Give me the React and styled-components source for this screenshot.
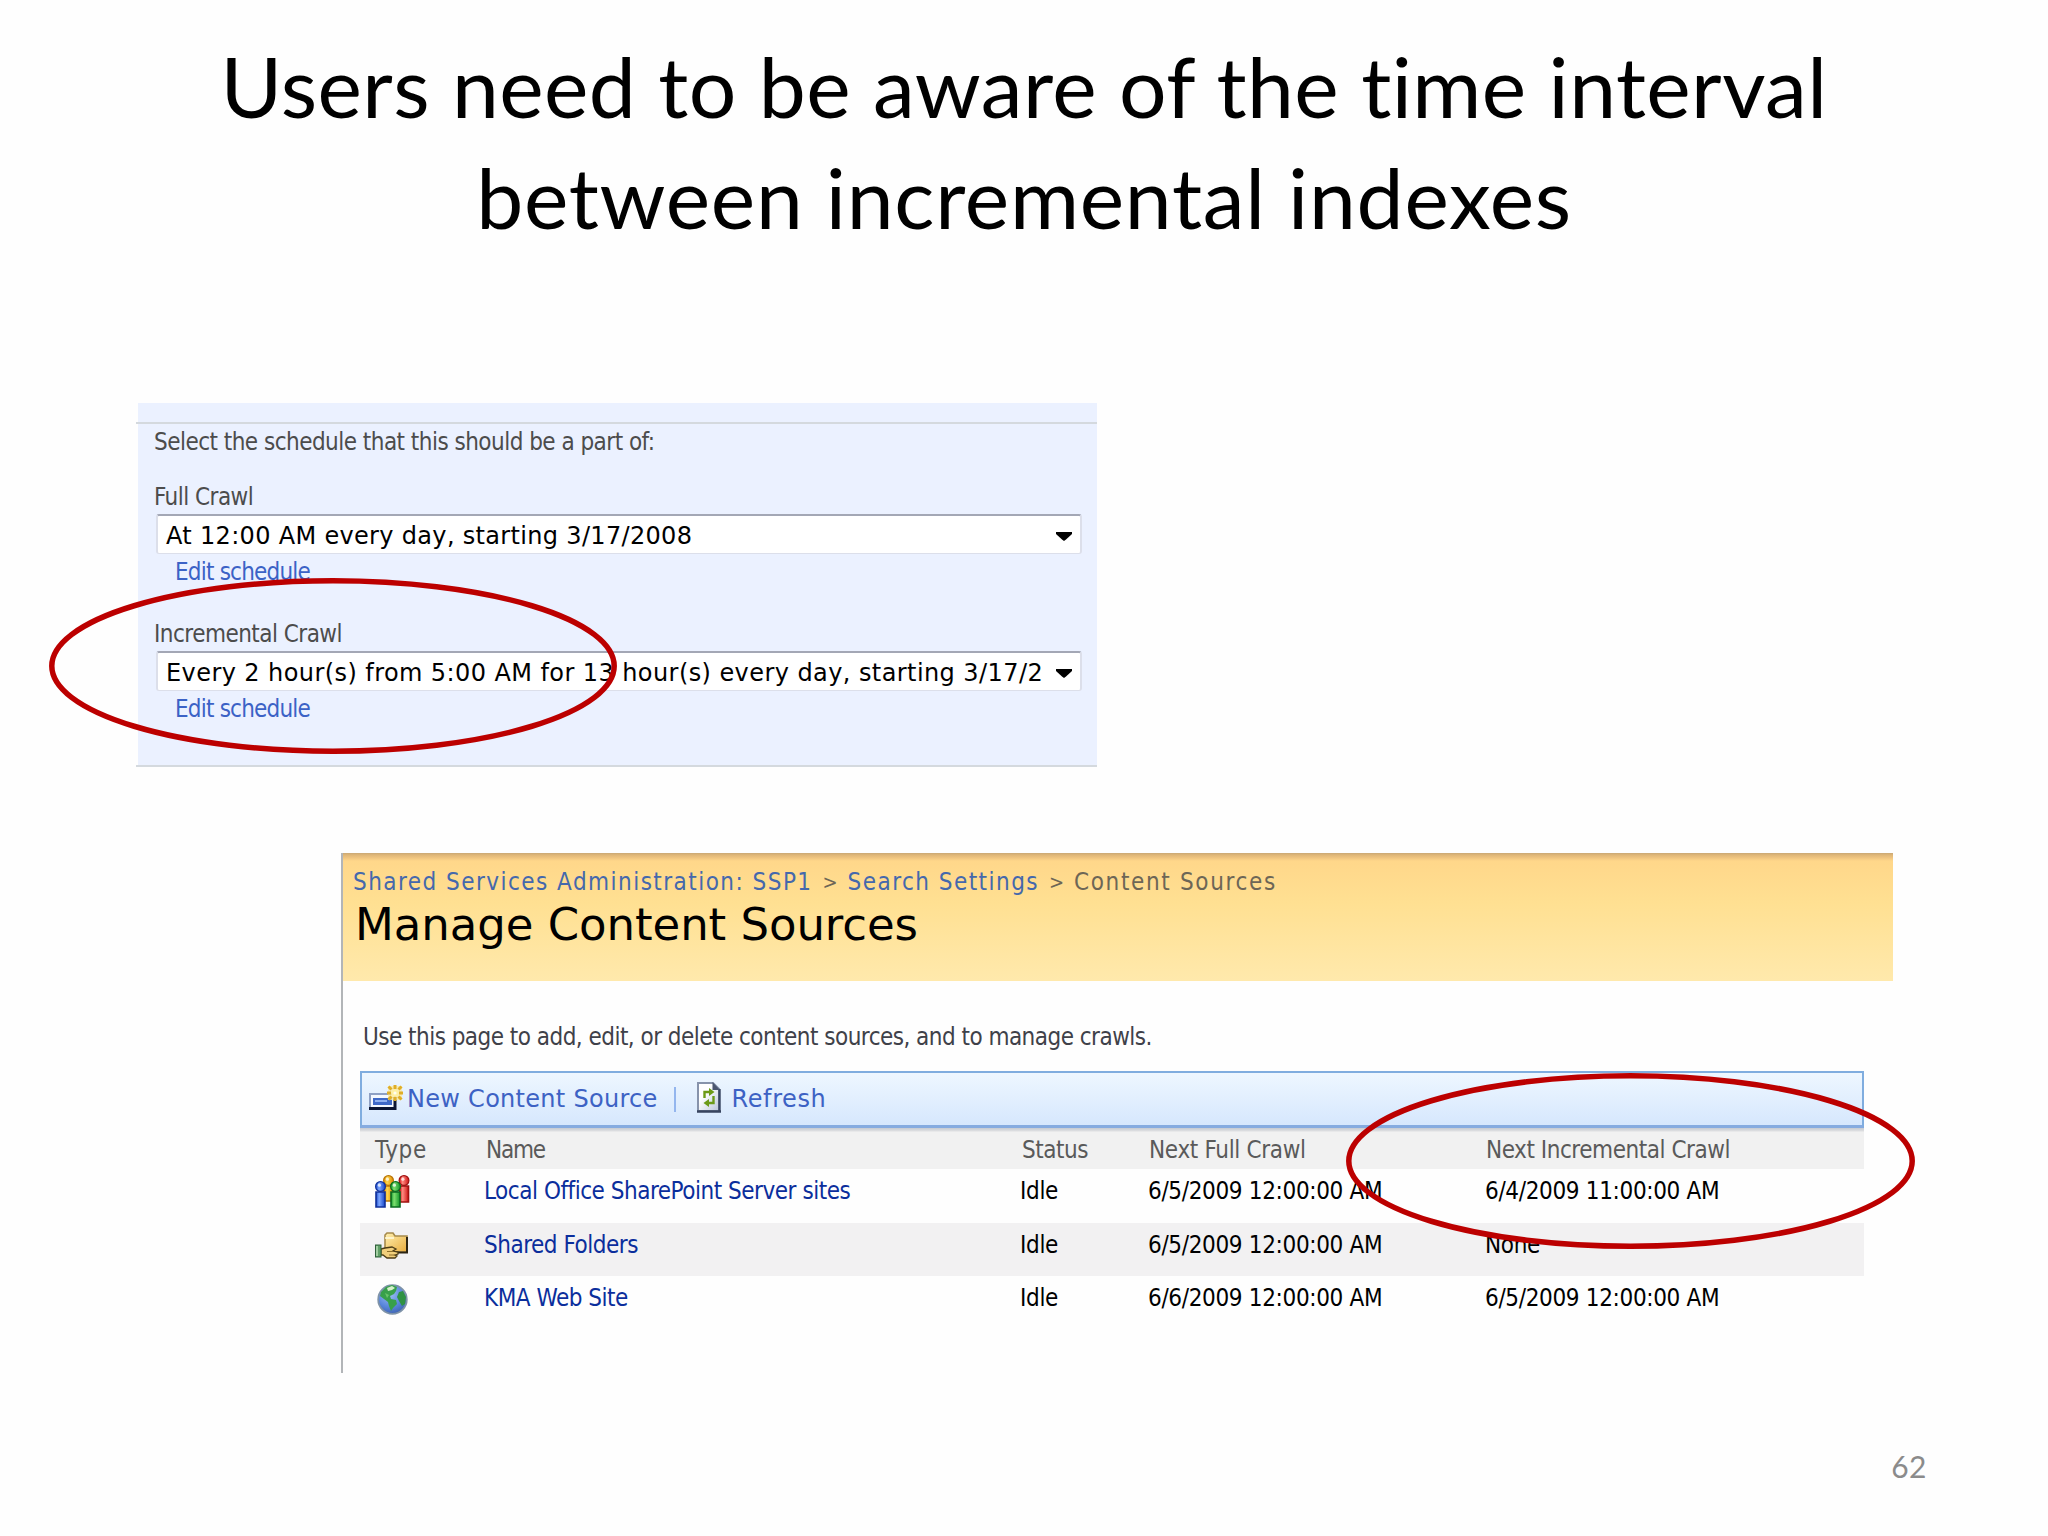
import React from 'react'
import styled, { createGlobalStyle } from 'styled-components'

const GlobalStyle = createGlobalStyle`
* {
    box-sizing: border-box;
}

body {
    margin: 0;
    background: #fefefe;
}
`

const Slide = styled.main`
position: relative;
width: 2048px;
height: 1536px;
overflow: hidden;
display: flex;
flex-direction: column;
align-items: flex-start;
background: #fefefe;
font-family: "DejaVu Sans Condensed", "DejaVu Sans", sans-serif;
font-size: 24px;
line-height: 28px;
letter-spacing: -0.53px;
white-space: nowrap;
`

const Title = styled.h1`
width: 100%;
margin: 0;
padding-top: 30px;
font-family: Lato, sans-serif;
font-size: 84px;
font-weight: 400;
line-height: 111px;
text-align: center;
color: #000;
`

const TitleLine = styled.div`
letter-spacing: ${({ $spacing }) => $spacing};
`

const SchedulePanel = styled.section`
width: 961px;
height: 364px;
margin: 151px 0 0 136px;
border-bottom: 2px solid #d4d9de;
background: linear-gradient(#ebf1ff, #ebf1ff) 2px 0 no-repeat;
color: #4c4c4c;
`

const PanelStrip = styled.div`
height: 21px;
border-bottom: 2px solid #d4d9de;
`

const PanelBody = styled.div`
display: flex;
flex-direction: column;
align-items: flex-start;
padding: 4px 15px 0 18px;
`

const Field = styled.div`
display: flex;
flex-direction: column;
align-items: flex-start;
margin-top: ${({ $top }) => $top};
`

const SelectBox = styled.div`
display: flex;
align-items: center;
justify-content: space-between;
width: 926px;
height: 40px;
margin: 3px 0 4px 2px;
padding: 3px 8px 0 8px;
border: 2px solid #dcdfea;
border-top-color: #a3a7b5;
border-bottom-width: 1px;
border-radius: 3px;
background: #fff;
color: #000;
`

const SelectText = styled.span`
font-family: "DejaVu Sans", sans-serif;
letter-spacing: ${({ $spacing }) => $spacing};
`

const EditLink = styled.a`
margin-left: 21px;
letter-spacing: -0.8px;
color: #3b62c6;
`

const SourcesPanel = styled.section`
width: 1552px;
height: 520px;
margin: 86px 0 0 341px;
border-left: 2px solid #b2b5b8;
`

const Banner = styled.header`
height: 128px;
padding: 15px 0 0 10px;
background: linear-gradient(#c9a775 0, #dfb677 2px, #f0c580 5px, #ffd78a 8px, #ffe092 50px, #ffe9ac 100%);
`

const Breadcrumb = styled.nav`
display: flex;
color: #6d6656;
`

const Crumb = styled.span`
letter-spacing: ${({ $spacing }) => $spacing || '1.46px'};
color: ${({ $link }) => ($link ? '#4568ac' : '#6d6656')};
`

const Separator = styled.span`
width: 35px;
font-size: 20px;
letter-spacing: 0;
text-align: center;
`

const Heading = styled.h2`
margin: 2px 0 0 2px;
font-family: "DejaVu Sans", sans-serif;
font-size: 45px;
font-weight: 400;
line-height: 54px;
letter-spacing: -0.06px;
color: #000;
`

const Intro = styled.p`
margin: 42px 0 20px 20px;
color: #3f4149;
`

const Toolbar = styled.div`
display: flex;
align-items: center;
width: 1504px;
height: 57px;
margin-left: 17px;
padding-left: 7px;
border: 2px solid #80addf;
border-bottom: 3px solid #86abe0;
background: linear-gradient(#eef7ff, #d6e7fd);
font-family: "DejaVu Sans", sans-serif;
color: #3d62c4;
`

const ToolButton = styled.span`
display: flex;
align-items: center;
gap: ${({ $gap }) => $gap};
letter-spacing: ${({ $spacing }) => $spacing};

svg {
    margin-bottom: 3px;
}
`

const Divider = styled.span`
width: 2px;
height: 25px;
margin: 0 21px 0 16px;
background: #94b6ee;
`

const Table = styled.div`
width: 1504px;
margin-left: 17px;
`

const Row = styled.div`
display: grid;
grid-template-columns: 109px 536px 128px 337px 1fr;
align-items: start;
height: 53.5px;
padding-left: 15px;
line-height: 44px;
letter-spacing: -0.34px;
background: ${({ $shaded }) => ($shaded ? '#f2f1f2' : 'transparent')};
color: #000;
`

const HeadRow = styled(Row)`
height: 41px;
padding-top: 2px;
line-height: 41px;
letter-spacing: -0.46px;
background: linear-gradient(#c6cad2 0, #dedfe1 3px, #f1f1f1 4px);
color: #5a5a5a;
`

const HeadCell = styled.span`
padding-left: ${({ $indent }) => $indent || 0};
letter-spacing: ${({ $spacing }) => $spacing || 'inherit'};
`

const IconCell = styled.span`
display: flex;
padding: ${({ $pad }) => $pad};
`

const NameLink = styled.a`
letter-spacing: -0.48px;
color: #0b2e9c;
`

const PageNumber = styled.footer`
align-self: flex-end;
margin-top: 75px;
padding-right: 121px;
font-family: Lato, sans-serif;
font-size: 30px;
line-height: 36px;
letter-spacing: 0.5px;
color: #8b8b8b;
`

const Ring = styled.svg`
position: absolute;
left: ${({ $left }) => $left}px;
top: ${({ $top }) => $top}px;
`

const Arrow = () => (
  <svg width="16" height="9" viewBox="0 0 16 9">
    <path d="M0 0h16v2l-6 5.5-2 1.5-2-1.5L0 2z" fill="#000" />
  </svg>
)

const NewIcon = () => (
  <svg width="34" height="26" viewBox="0 0 34 26">
    <rect x="1" y="9" width="25" height="14" fill="#f4f8ff" stroke="#8ea0c4" strokeWidth="2" />
    <path d="M0 23.5h27M26 12v13" stroke="#0b1533" strokeWidth="3" />
    <rect x="4" y="13" width="19" height="7" fill="#3f69c8" />
    <path d="M6 16h12" stroke="#8fb0f0" strokeWidth="2" />
    <rect x="19" y="1" width="14" height="14" fill="#fbe9a0" opacity="0.8" />
    <g stroke="#dfae28" strokeWidth="3">
      <path d="M26 0v4M26 12v4M18 8h4M30 8h4M19.500 1.500l3 3M32.500 1.500l-3 3M19.500 14.500l3-3M32.500 14.500l-3-3" />
    </g>
    <circle cx="26" cy="8" r="3.600" fill="#fff0a2" />
    <circle cx="26" cy="8" r="1.600" fill="#fffdf0" />
  </svg>
)

const RefreshIcon = () => (
  <svg width="24" height="31" viewBox="0 0 24 31">
    <defs>
      <linearGradient id="sheet" x1="0" y1="0" x2="1" y2="1">
        <stop offset="0.35" stopColor="#fff" />
        <stop offset="1" stopColor="#b9c4d8" />
      </linearGradient>
    </defs>
    <path d="M1 1h15l6 6v22H1z" fill="url(#sheet)" stroke="#8793ab" strokeWidth="2" />
    <path d="M22.5 7v23M0 29.5h24" stroke="#37445f" strokeWidth="2.4" />
    <path d="M15.500 0l7.500 8h-7.500z" fill="#4a566f" />
    <path d="M7.500 16v-6h5M16.500 14v7h-5" fill="none" stroke="#6c9a16" strokeWidth="2.400" />
    <path d="M12 6l5.500 4-5.500 4zM12 17l-5.500 4 5.500 4z" fill="#6c9a16" />
  </svg>
)

const Person = ({ x, y, id, h }) => (
  <g transform={`translate(${x} ${y})`}>
    <path d={`M1 11h9v${h}H1z`} fill={`url(#${id})`} stroke={`url(#${id}-edge)`} strokeWidth="1.6" />
    <circle cx="5.5" cy="5.5" r="4.9" fill={`url(#${id})`} stroke={`url(#${id}-edge)`} strokeWidth="1.2" />
    <circle cx="4.4" cy="4.2" r="1.6" fill="#fff" opacity="0.75" />
  </g>
)

const people = [
  ['gold', '#ffd84f', '#e08a00', '#b87408'],
  ['red', '#ff8a80', '#cf1414', '#9e1010'],
  ['blue', '#7fa8ff', '#1445c8', '#10309a'],
  ['green', '#7fe070', '#12962a', '#0a6a20'],
]

const PeopleIcon = () => (
  <svg width="35" height="33" viewBox="0 0 35 33">
    <defs>
      {people.map(([id, light, dark, edge]) => (
        <React.Fragment key={id}>
          <linearGradient id={id}>
            <stop offset="0" stopColor={dark} />
            <stop offset="0.35" stopColor={light} />
            <stop offset="1" stopColor={dark} />
          </linearGradient>
          <linearGradient id={`${id}-edge`}>
            <stop offset="0" stopColor={edge} />
            <stop offset="1" stopColor={edge} />
          </linearGradient>
        </React.Fragment>
      ))}
    </defs>
    <Person x={8} y={0} h={15} id="gold" />
    <Person x={23.5} y={0} h={16} id="red" />
    <Person x={0} y={6} h={15} id="blue" />
    <Person x={15} y={6} h={15} id="green" />
  </svg>
)

const FolderIcon = () => (
  <svg width="33" height="28" viewBox="0 0 33 28">
    <defs>
      <linearGradient id="folder" x1="0" y1="0" x2="1" y2="1">
        <stop offset="0" stopColor="#fff0b0" />
        <stop offset="1" stopColor="#e9ac3c" />
      </linearGradient>
    </defs>
    <path d="M10 17V3l2-2h6l2 3h12v16H12z" fill="url(#folder)" stroke="#a68a4c" strokeWidth="1.6" />
    <path d="M32 5v15.500H20" fill="none" stroke="#2c2412" strokeWidth="2" />
    <path d="M10 6h9" stroke="#fffbe0" strokeWidth="1.5" />
    <path d="M6 17l4-1 7-1 4 2-3 2 5 1v2l-3 1 2 1-2 2h-8l-4-3H6z" fill="#f1cf7c" stroke="#4d3d16" strokeWidth="1.3" />
    <path d="M12 19.500h6M14 23h6" stroke="#8f6f28" strokeWidth="1.2" />
    <rect x="0.5" y="13" width="5.5" height="12" fill="#5f9e66" stroke="#2f5f3a" />
    <path d="M2 14v10" stroke="#b6dcb4" strokeWidth="1.5" />
  </svg>
)

const GlobeIcon = () => (
  <svg width="31" height="31" viewBox="0 0 31 31">
    <defs>
      <radialGradient id="sea" cx="0.4" cy="0.3" r="0.75">
        <stop offset="0" stopColor="#9ec1f2" />
        <stop offset="0.6" stopColor="#5a87dc" />
        <stop offset="1" stopColor="#3b60ae" />
      </radialGradient>
    </defs>
    <circle cx="15.5" cy="15.5" r="14.3" fill="url(#sea)" stroke="#7f93a8" strokeWidth="1.8" />
    <path d="M4 8l5-5 6-2 5 2-1 4-2 3-4 2 1 3 5 1 1 4-4 4-2 3-2-5-1-4-4-3-4-3z" fill="#38a04a" />
    <path d="M10 4l5-2 3 2-3 2-4 1z" fill="#d5efca" />
    <path d="M22 8l4-1 3 6-1 7-3 2-3-5-2-4z" fill="#2f9243" />
    <path d="M8 9l4 2-2 3z" fill="#69c46a" />
  </svg>
)

const rows = [
  { name: 'Local Office SharePoint Server sites', icon: <PeopleIcon />, pad: '6px 0 0', full: '6/5/2009 12:00:00 AM', next: '6/4/2009 11:00:00 AM' },
  { name: 'Shared Folders', icon: <FolderIcon />, pad: '9px 0 0', full: '6/5/2009 12:00:00 AM', next: 'None' },
  { name: 'KMA Web Site', icon: <GlobeIcon />, pad: '8px 0 0 2px', full: '6/6/2009 12:00:00 AM', next: '6/5/2009 12:00:00 AM' },
]

const Highlight = ({ left, top, width, height }) => (
  <Ring $left={left} $top={top} width={width} height={height}>
    <ellipse cx={width / 2} cy={height / 2} rx={width / 2 - 2.8} ry={height / 2 - 2.8} fill="none" stroke="#bc0000" strokeWidth="5.5" />
  </Ring>
)

const ScheduleField = ({ label, value, spacing, top }) => (
  <Field $top={top}>
    <div>{label}</div>
    <SelectBox>
      <SelectText $spacing={spacing}>{value}</SelectText>
      <Arrow />
    </SelectBox>
    <EditLink>Edit schedule</EditLink>
  </Field>
)

const App = () => {
  return (
    <>
      <GlobalStyle />
      <Slide>
        <Title>
          <TitleLine $spacing="0.45px">Users need to be aware of the time interval</TitleLine>
          <TitleLine $spacing="0.75px">between incremental indexes</TitleLine>
        </Title>

        <SchedulePanel>
          <PanelStrip />
          <PanelBody>
            <div>Select the schedule that this should be a part of:</div>
            <ScheduleField
              top="27px"
              label="Full Crawl"
              value="At 12:00 AM every day, starting 3/17/2008"
              spacing="0.32px"
            />
            <ScheduleField
              top="34px"
              label="Incremental Crawl"
              value="Every 2 hour(s) from 5:00 AM for 13 hour(s) every day, starting 3/17/2"
              spacing="0.42px"
            />
          </PanelBody>
        </SchedulePanel>

        <SourcesPanel>
          <Banner>
            <Breadcrumb>
              <Crumb $link>Shared Services Administration: SSP1</Crumb>
              <Separator>&gt;</Separator>
              <Crumb $link>Search Settings</Crumb>
              <Separator>&gt;</Separator>
              <Crumb $spacing="1.65px">Content Sources</Crumb>
            </Breadcrumb>
            <Heading>Manage Content Sources</Heading>
          </Banner>
          <Intro>Use this page to add, edit, or delete content sources, and to manage crawls.</Intro>
          <Toolbar>
            <ToolButton $gap="4px" $spacing="0.28px">
              <NewIcon />
              New Content Source
            </ToolButton>
            <Divider />
            <ToolButton $gap="11px" $spacing="0.6px">
              <RefreshIcon />
              Refresh
            </ToolButton>
          </Toolbar>
          <Table>
            <HeadRow>
              <HeadCell $spacing="0.7px">Type</HeadCell>
              <HeadCell $indent="2px" $spacing="-1.2px">Name</HeadCell>
              <HeadCell $indent="2px">Status</HeadCell>
              <HeadCell $indent="1px" $spacing="-0.32px">Next Full Crawl</HeadCell>
              <HeadCell $indent="1px">Next Incremental Crawl</HeadCell>
            </HeadRow>
            {rows.map((row, i) => (
              <Row key={row.name} $shaded={i % 2 === 1}>
                <IconCell $pad={row.pad}>{row.icon}</IconCell>
                <NameLink>{row.name}</NameLink>
                <span>Idle</span>
                <span>{row.full}</span>
                <span>{row.next}</span>
              </Row>
            ))}
          </Table>
        </SourcesPanel>

        <PageNumber>62</PageNumber>

        <Highlight left={48.5} top={577.5} width={568} height={176} />
        <Highlight left={1345.5} top={1072.5} width={569} height={176} />
      </Slide>
    </>
  )
}

export default App
